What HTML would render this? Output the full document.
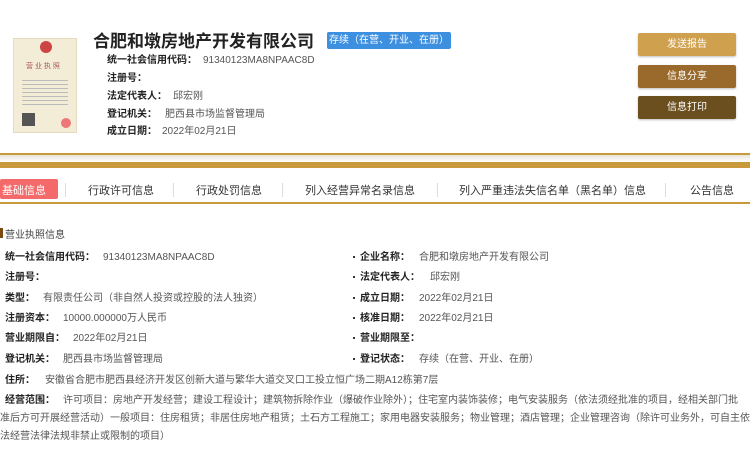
<!DOCTYPE html><html><head><meta charset="utf-8"><style>
*{margin:0;padding:0;box-sizing:border-box}
body{width:750px;height:450px;background:#fff;font-family:"Liberation Sans","Noto Sans CJK SC",sans-serif;position:relative;overflow:hidden;color:#333}
.a{position:absolute;white-space:nowrap}
.t{font-size:17px;font-weight:bold;color:#222;left:93px;top:27px}
.badge{left:327px;top:32px;width:124px;height:17px;background:#3d8fe0;color:#fff;font-size:10px;line-height:17px;text-align:center;border-radius:2px}
.l{font-size:10px;line-height:14px;font-weight:bold;color:#222}
.v{font-size:10px;line-height:14px;color:#555}
.btn{left:638px;width:98px;height:23px;color:#fff;font-size:10px;line-height:23px;text-align:center;border-radius:2px;box-shadow:0 1px 2px rgba(0,0,0,.25)}
.tab{font-size:11px;top:182px;color:#333}
.sep{top:183px;width:1px;height:14px;background:#ddd}
.bul{width:2px;height:2px;background:#333}
</style></head><body>
<div class="a" style="left:13px;top:38px;width:64px;height:95px;background:#f3ecd6;border:1px solid #e5dcc0">
<div style="position:absolute;left:26px;top:2px;width:12px;height:12px;border-radius:50%;background:#c44"></div>
<div style="position:absolute;left:12px;top:22px;font-size:7px;color:#a55">营 业 执 照</div>
<div style="position:absolute;left:8px;top:38px;width:46px;height:28px;background:repeating-linear-gradient(#fff0 0 3px,#bbb 3px 4px)"></div>
<div style="position:absolute;left:8px;top:74px;width:13px;height:13px;background:#555"></div>
<div style="position:absolute;left:47px;top:79px;width:10px;height:10px;border-radius:50%;background:#e77"></div>
</div>
<div class="a t">合肥和墩房地产开发有限公司</div>
<div class="a badge">存续（在营、开业、在册）</div>
<div class="a l" style="left:107px;top:54px">统一社会信用代码：</div><div class="a v" style="left:203px;top:54px">91340123MA8NPAAC8D</div>
<div class="a l" style="left:107px;top:72px">注册号：</div>
<div class="a l" style="left:107px;top:90px">法定代表人：</div><div class="a v" style="left:173px;top:90px">邱宏刚</div>
<div class="a l" style="left:107px;top:108px">登记机关：</div><div class="a v" style="left:165px;top:108px">肥西县市场监督管理局</div>
<div class="a l" style="left:107px;top:125px">成立日期：</div><div class="a v" style="left:162px;top:125px">2022年02月21日</div>
<div class="a btn" style="top:33px;background:#cfa14f">发送报告</div>
<div class="a btn" style="top:65px;background:#9a6a2c">信息分享</div>
<div class="a btn" style="top:96px;background:#6b4f1f">信息打印</div>
<div class="a" style="left:0;top:153px;width:750px;height:2px;background:#c99a3c"></div>
<div class="a" style="left:0;top:155px;width:750px;height:7px;background:linear-gradient(#e8e4dc,#fff)"></div>
<div class="a" style="left:0;top:162px;width:750px;height:6px;background:#c99a3c"></div>
<div class="a" style="left:0;top:179px;width:58px;height:20px;background:#f46a6a;border-radius:2px"></div>
<div class="a tab" style="left:2px;color:#fff">基础信息</div>
<div class="a sep" style="left:65px"></div>
<div class="a tab" style="left:88px">行政许可信息</div>
<div class="a sep" style="left:173px"></div>
<div class="a tab" style="left:196px">行政处罚信息</div>
<div class="a sep" style="left:282px"></div>
<div class="a tab" style="left:305px">列入经营异常名录信息</div>
<div class="a sep" style="left:437px"></div>
<div class="a tab" style="left:459px">列入严重违法失信名单（黑名单）信息</div>
<div class="a sep" style="left:665px"></div>
<div class="a tab" style="left:690px">公告信息</div>
<div class="a" style="left:0;top:202px;width:750px;height:2px;background:#c99a3c"></div>
<div class="a" style="left:0;top:228px;width:3px;height:10px;background:#7a4a12"></div>
<div class="a" style="left:5px;top:226px;font-size:10px;color:#444">营业执照信息</div>
<div class="a l" style="left:5px;top:251px">统一社会信用代码：</div><div class="a v" style="left:103px;top:251px">91340123MA8NPAAC8D</div>
<div class="a l" style="left:5px;top:271px">注册号：</div>
<div class="a l" style="left:5px;top:292px">类型：</div><div class="a v" style="left:43px;top:292px">有限责任公司（非自然人投资或控股的法人独资）</div>
<div class="a l" style="left:5px;top:312px">注册资本：</div><div class="a v" style="left:63px;top:312px">10000.000000万人民币</div>
<div class="a l" style="left:5px;top:332px">营业期限自：</div><div class="a v" style="left:73px;top:332px">2022年02月21日</div>
<div class="a l" style="left:5px;top:353px">登记机关：</div><div class="a v" style="left:63px;top:353px">肥西县市场监督管理局</div>
<div class="a l" style="left:5px;top:374px">住所：</div><div class="a v" style="left:45px;top:374px">安徽省合肥市肥西县经济开发区创新大道与繁华大道交叉口工投立恒广场二期A12栋第7层</div>
<div class="a l" style="left:5px;top:394px">经营范围：</div><div class="a v" style="left:63px;top:394px">许可项目：房地产开发经营；建设工程设计；建筑物拆除作业（爆破作业除外）；住宅室内装饰装修；电气安装服务（依法须经批准的项目，经相关部门批</div>
<div class="a v" style="left:0;top:412px">准后方可开展经营活动）一般项目：住房租赁；非居住房地产租赁；土石方工程施工；家用电器安装服务；物业管理；酒店管理；企业管理咨询（除许可业务外，可自主依</div>
<div class="a v" style="left:0;top:430px">法经营法律法规非禁止或限制的项目）</div>
<div class="a bul" style="left:353px;top:256px"></div>
<div class="a l" style="left:360px;top:251px">企业名称：</div><div class="a v" style="left:419px;top:251px">合肥和墩房地产开发有限公司</div>
<div class="a bul" style="left:353px;top:276px"></div>
<div class="a l" style="left:360px;top:271px">法定代表人：</div><div class="a v" style="left:430px;top:271px">邱宏刚</div>
<div class="a bul" style="left:353px;top:297px"></div>
<div class="a l" style="left:360px;top:292px">成立日期：</div><div class="a v" style="left:419px;top:292px">2022年02月21日</div>
<div class="a bul" style="left:353px;top:317px"></div>
<div class="a l" style="left:360px;top:312px">核准日期：</div><div class="a v" style="left:419px;top:312px">2022年02月21日</div>
<div class="a bul" style="left:353px;top:337px"></div>
<div class="a l" style="left:360px;top:332px">营业期限至：</div>
<div class="a bul" style="left:353px;top:358px"></div>
<div class="a l" style="left:360px;top:353px">登记状态：</div><div class="a v" style="left:419px;top:353px">存续（在营、开业、在册）</div>
</body></html>
